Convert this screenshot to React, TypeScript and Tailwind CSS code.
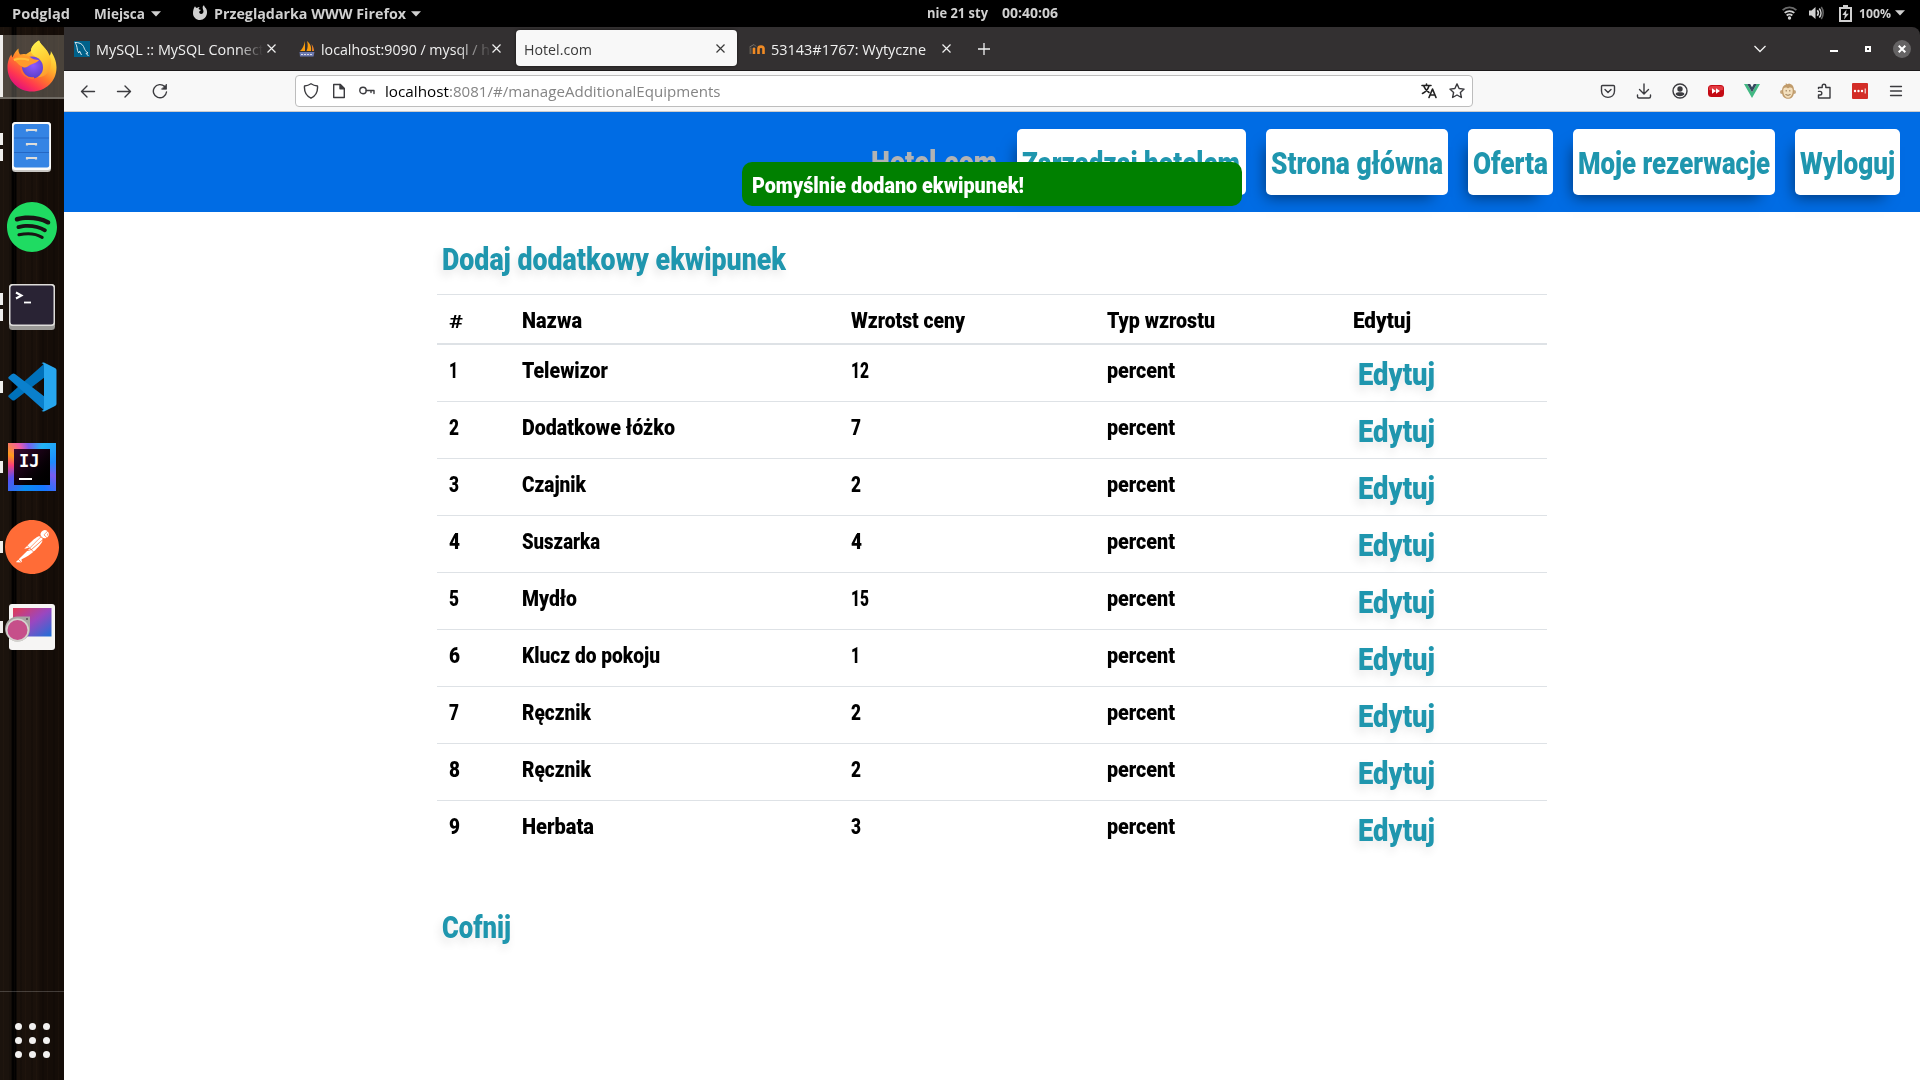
import { useLayoutEffect, useRef, type ReactNode } from "react";
import { SiPostman, SiSpotify } from "react-icons/si";

/** Text squeezed or stretched horizontally to an exact width. */
function Fit({ w, className = "", children }: { w: number; className?: string; children: ReactNode }) {
  const ref = useRef<HTMLSpanElement>(null);
  useLayoutEffect(() => {
    const el = ref.current;
    if (el) el.style.transform = `scaleX(${w / el.getBoundingClientRect().width})`;
    return () => {
      if (el) el.style.transform = "";
    };
  }, [w]);
  return (
    <span className={`inline-flex shrink-0 whitespace-pre ${className}`} style={{ width: w }}>
      <span ref={ref} className="inline-block shrink-0 origin-left">
        {children}
      </span>
    </span>
  );
}

function Caret({ className = "" }: { className?: string }) {
  return (
    <svg className={`shrink-0 ${className}`} width="10" height="6" viewBox="0 0 10 6">
      <path d="M0 0.3h10L5 5.5z" fill="#d0d0d0" />
    </svg>
  );
}

function TopBar() {
  return (
    <header className="flex h-[27px] shrink-0 items-center bg-black font-['Open_Sans',sans-serif] text-[14px] leading-[26px] font-bold text-[#d0d0d0]">
      <Fit w={58} className="ml-[12px]">Podgląd</Fit>
      <Fit w={51} className="ml-[24px]">Miejsca</Fit>
      <Caret className="ml-[6px]" />
      <svg className="mb-[1px] ml-[31px] shrink-0" width="16" height="16" viewBox="0 0 16 16">
        <path d="M3 1.2c.4.9 1.1 1.6 2 1.900 1-.9 2.200-1.100 3-1-1.400.7-1.500 1.600-1.100 2.200.6.5 1.700.4 1.900.8-.2.9-1.300 1-1.600 1.700-.2 1.200.7 2.100 1.900 2.100 1.600 0 2.700-1.300 2.300-3.200-.2-1-.9-1.900-.7-3.900.3-.9.8-1.300 1.300-1.600.3 1.200.9 1.800 1.700 2.900 1 1.400 1.500 3 1.300 5C14.600 12.200 11.700 15 8 15 4.100 15 1 12 1 8.200 1 5.500 1.600 3 3 1.200z" fill="#d0d0d0" />
      </svg>
      <Fit w={192} className="ml-[6px]">Przeglądarka WWW Firefox</Fit>
      <Caret className="ml-[5px]" />
      <Fit w={61} className="mb-[2px] ml-[506px]">nie 21 sty</Fit>
      <Fit w={56} className="mb-[2px] ml-[14px]">00:40:06</Fit>
      <div className="ml-auto flex items-center pr-[15px] pb-[1px]">
        <svg width="15" height="14" viewBox="0 0 15 14" fill="none" stroke="#d0d0d0" strokeWidth="1.800">
          <path d="M.6 4.200C4.400.400 10.600.400 14.400 4.200" stroke="#6a6a6a" />
          <path d="M2.700 6.900c2.600-2.500 7-2.500 9.600 0M4.700 9.500c1.500-1.500 4.100-1.500 5.600 0" />
          <circle cx="7.500" cy="12" r="1.700" fill="#d0d0d0" stroke="none" />
        </svg>
        <svg className="ml-[12px]" width="15" height="14" viewBox="0 0 15 14" fill="none">
          <path d="M0 4.500h2.500L6.500 1v12L2.500 9.500H0z" fill="#d0d0d0" />
          <path d="M8.300 4.300c1.300 1.600 1.300 3.800 0 5.400M10.300 2.400c2.200 2.700 2.200 6.500 0 9.200" stroke="#d0d0d0" strokeWidth="1.600" />
          <path d="M12.300 1c2.500 3.500 2.500 8.500 0 12" stroke="#666" strokeWidth="1.500" />
        </svg>
        <svg className="ml-[15px]" width="13" height="17" viewBox="0 0 13 17">
          <path d="M1 3h11v13H1z" fill="none" stroke="#d0d0d0" strokeWidth="2" />
          <path d="M4 0h5v3H4zM7.500 4.500 3.300 10h2.600L5 14.500 9.800 8.700H7z" fill="#d0d0d0" />
        </svg>
        <Fit w={32} className="ml-[7px] text-[13px]">100%</Fit>
        <Caret className="ml-[4px]" />
      </div>
    </header>
  );
}

function FirefoxIcon() {
  return (
    <svg width="50" height="52" viewBox="0 0 50 52">
      <defs>
        <linearGradient id="ffBody" x1="0.8" y1="0.1" x2="0.25" y2="0.95">
          <stop offset="0" stopColor="#fff04a" />
          <stop offset="0.3" stopColor="#ffbd2f" />
          <stop offset="0.55" stopColor="#ff7a2a" />
          <stop offset="0.8" stopColor="#ff3750" />
          <stop offset="1" stopColor="#e4127a" />
        </linearGradient>
        <radialGradient id="ffGlobe" cx="0.55" cy="0.4" r="0.6">
          <stop offset="0" stopColor="#9059ff" />
          <stop offset="1" stopColor="#5a3ec8" />
        </radialGradient>
        <linearGradient id="ffTail" x1="0.3" y1="0" x2="0.6" y2="1">
          <stop offset="0" stopColor="#fff14f" />
          <stop offset="0.6" stopColor="#ffc930" />
          <stop offset="1" stopColor="#ff9a2e" />
        </linearGradient>
      </defs>
      <path d="M32 .5c1 3 3.500 5 6.500 8.500 2 2.500 3 5 3.500 7 1.500-.5 2-3 1.800-5C47 16 49.500 21 49.500 27.500 49.500 41.500 38.500 51.500 25 51.500S.5 41 .5 27.500C.5 22 2 17 4.500 14.500c.2 1.800.7 2.500 1 3C7 13 9.500 10 11.500 8.500c-.2 2.500.5 4.500 1.500 6 2-.5 3.500-.7 6-.3L24 11c0-4 3.500-8 8-10.500z" fill="url(#ffBody)" />
      <path d="M32 .5c1 3 3.500 5 6.500 8.500 7 8 7 18 2 24-4 5-12 5-14 3 9-1 12-10 7-16-3-3-8-4-9.500-8C23.500 8 27 3 32 .5z" fill="url(#ffTail)" />
      <circle cx="25" cy="27.500" r="11" fill="url(#ffGlobe)" />
      <path d="M6 19c6-4 12-4 17-2 2 2 5 3 9 3-2 3-6 3.500-9 5-2.500 1.500-3.500 3-6 2.500-4-1-6-4.500-11-8.500z" fill="#ff9a2b" />
      <path d="M7 20c5-2 10-1.500 15 0" stroke="#ffbe3c" strokeWidth="2" fill="none" />
      <path d="M14 26c0 8 6 13 13 12" stroke="#ff6a35" strokeWidth="2" fill="none" />
    </svg>
  );
}

function FilesIcon() {
  return (
    <svg className="mr-[1px]" width="39" height="50" viewBox="0 0 39 50">
      <rect x="0" y="0" width="39" height="50" rx="3.500" fill="#c9c7c4" />
      <rect x="0" y="0" width="39" height="48" rx="3.500" fill="#fafafa" />
      <rect x="1.800" y="2" width="35.400" height="43.500" rx="2" fill="#3584e4" />
      <path d="M2 16h35M2 30.500h35" stroke="#2467c4" strokeWidth="1" />
      {[9.500, 23.500, 37.500].map((y) => (
        <path key={y} d={`M15 ${y - 1}v-1.500h9v1.500`} transform="translate(0 1)" stroke="#deddda" strokeWidth="2.200" fill="none" />
      ))}
    </svg>
  );
}

function TerminalIcon() {
  return (
    <svg width="46" height="46" viewBox="0 0 46 46">
      <rect width="46" height="46" rx="3.500" fill="#9a9996" />
      <rect width="46" height="42" rx="3.500" fill="#deddda" />
      <rect x="1.500" y="1.500" width="43" height="39" rx="2.500" fill="#292334" />
      <path d="m7 8.500 5.500 3L7 14.500" stroke="#fff" strokeWidth="2" fill="none" />
      <path d="M15 18.500h7" stroke="#fff" strokeWidth="1.800" />
    </svg>
  );
}

function CodeIcon() {
  return (
    <svg width="50" height="50" viewBox="0 0 50 50">
      <path d="M1.500 35 5 38c1 .7 2 .7 3 0l30-23V1L2 33c-.8.7-.9 1.400-.5 2z" fill="#0071ba" />
      <path d="M1.500 15 5 12c1-.7 2-.7 3 0l30 23v14L2 17c-.8-.7-.9-1.400-.5-2z" fill="#0a80cd" />
      <path d="M37 .5 48 6c1 .6 1.500 1.500 1.500 2.500v33c0 1-.5 2-1.500 2.500L37 49.500c-1 .3-2 0-2.500-.7 1.500 0 2.500-1 2.500-2.500V3.700c0-1.500-1-2.500-2.500-2.500C35 .5 36 .2 37 .5z" fill="#27a6ee" />
    </svg>
  );
}

function IdeaIcon() {
  return (
    <div className="flex size-[48px] items-center justify-center bg-[conic-gradient(from_300deg,#ff9b1a,#f05aa8_8%,#7a5cf0_14%,#22b6f5_24%,#1e8bff_38%,#7a5cf0_48%,#1777ff_58%,#0a8cf0_72%,#5a4ff0_84%,#fc3f7a_93%,#ff9b1a)]">
      <div className="flex h-[36px] w-[36px] flex-col bg-gradient-to-br from-[#3a0a33] to-black pt-[5px] pl-[5px] font-['DejaVu_Sans_Mono',monospace] leading-[14px] font-bold text-white">
        <span className="text-[17px]">IJ</span>
        <span className="mt-[10px] h-[2px] w-[13px] bg-white" />
      </div>
    </div>
  );
}

function ScreenshotIcon() {
  return (
    <svg className="mr-[4px]" width="50" height="46" viewBox="0 0 50 46">
      <defs>
        <linearGradient id="shot" x1="0" y1="0" x2="1" y2="1">
          <stop offset="0" stopColor="#e23a54" />
          <stop offset="0.5" stopColor="#9a47c0" />
          <stop offset="1" stopColor="#1c71d8" />
        </linearGradient>
      </defs>
      <rect x="4" width="46" height="46" rx="3" fill="#f6f5f4" />
      <rect x="8" y="4" width="38.500" height="28.500" fill="url(#shot)" />
      <path d="M12.500 12.500H25V26a12.500 12.500 0 1 1-12.500-13.500z" fill="#a8a6a3" />
      <circle cx="12.500" cy="26" r="11.500" fill="#d5d3cf" />
      <circle cx="12.500" cy="26" r="10" fill="#c64f8a" />
      <circle cx="22" cy="15" r="1" fill="#555" />
    </svg>
  );
}

const dockItems: { key: string; icon: ReactNode; windows: number }[] = [
  { key: "firefox", icon: <FirefoxIcon />, windows: 0 },
  { key: "files", icon: <FilesIcon />, windows: 2 },
  {
    key: "spotify",
    icon: (
      <div className="flex size-[50px] items-center justify-center rounded-full bg-[radial-gradient(#191414_66%,transparent_67%)]">
        <SiSpotify size={50} color="#1fdb62" />
      </div>
    ),
    windows: 0,
  },
  { key: "terminal", icon: <TerminalIcon />, windows: 2 },
  { key: "code", icon: <CodeIcon />, windows: 1 },
  { key: "idea", icon: <IdeaIcon />, windows: 1 },
  {
    key: "postman",
    icon: (
      <div className="flex size-[54px] items-center justify-center rounded-full bg-[radial-gradient(#fff_66%,transparent_67%)]">
        <SiPostman size={54} color="#ff6c37" />
      </div>
    ),
    windows: 1,
  },
  { key: "screenshot", icon: <ScreenshotIcon />, windows: 1 },
];

function Dock() {
  return (
    <aside className="flex w-[64px] shrink-0 flex-col bg-[#160e09] bg-[repeating-linear-gradient(90deg,transparent_0_3px,rgba(90,60,35,.07)_3px_4px,transparent_4px_9px,rgba(0,0,0,.15)_9px_11px),linear-gradient(90deg,#1b130d_0_11px,#020101_12px_16px,#1a110b_17px_38px,#150d08_40px)]">
      {dockItems.map((item, i) => (
        <div key={item.key} className="flex h-[80px] items-center">
          <div className={`flex w-full items-center ${i === 0 ? "h-[64px] border-b-2 border-[#8a8780]/60 bg-[#c8c0b4]/30" : "h-full"}`}>
            <div className="flex w-[3px] flex-col justify-center gap-[4px] self-stretch">
              {i === 0 && <span className="h-full w-[3px] bg-[#f0efed]" />}
              {Array.from({ length: item.windows }, (_, n) => (
                <span key={n} className="h-[12px] w-[3px] bg-[#f0efed]" />
              ))}
            </div>
            <div className="flex w-[58px] items-center justify-center">{item.icon}</div>
          </div>
        </div>
      ))}
      <div className="mt-auto flex h-[89px] flex-col items-center border-t border-white/20">
        <div className="mt-[31px] grid grid-cols-3 gap-[7px]">
          {Array.from({ length: 9 }, (_, i) => (
            <span key={i} className="size-[7px] rounded-full bg-[#f2f1f0]" />
          ))}
        </div>
      </div>
    </aside>
  );
}

function Close({ className = "" }: { className?: string }) {
  return (
    <svg className={`shrink-0 ${className}`} width="9" height="9" viewBox="0 0 9 9" stroke="currentColor" strokeWidth="1.200">
      <path d="m.5.5 8 8M8.500.5l-8 8" />
    </svg>
  );
}

function TabStrip() {
  return (
    <div className="flex h-[44px] shrink-0 items-center rounded-tr-[8px] border-b border-[#1c1a1b] bg-[#333031] font-['Open_Sans',sans-serif] text-[14px] leading-[36px] text-[#f0f0f0]">
      <svg className="ml-[10px] shrink-0" width="16" height="16" viewBox="0 0 16 16" fill="none">
        <path d="M0 0h16v16H0z" fill="#00618a" />
        <path d="M1 1.500c4 0 7 1 8.500 4 1 2 1 4 4.500 6.500l-2 .3 2.500 2.700M1 1.500c1 1.500 1.500 2.500 2 5 .3 2 .5 4 1.800 5.500l.7-2 2 4" stroke="#dcebf2" strokeWidth="1" />
      </svg>
      <div className="ml-[6px] flex w-[167px] overflow-hidden pt-[2px] [mask-image:linear-gradient(90deg,#000_142px,transparent_167px)]">
        <Fit w={168}>MySQL :: MySQL Connect</Fit>
      </div>
      <Close className="ml-[4px]" />
      <svg className="ml-[23px] shrink-0" width="16" height="16" viewBox="0 0 16 16">
        <path d="M6 0v10H1c2.500-2 4-5.500 5-10zM8 0c4 3 4.500 7 4 10H7.500C9 7 9 3 8 0z" fill="#f89c0e" />
        <path d="M12.500 3c1.800 2 2.500 5 2.500 7h-2c.3-2.500 0-5-.5-7z" fill="#e9812a" />
        <path d="M.5 11h15l-1 4.500H1z" fill="#6c78af" />
        <path d="M2 13.500h12" stroke="#d8dbe8" strokeDasharray="2 1" />
      </svg>
      <div className="ml-[6px] flex w-[168px] overflow-hidden pt-[2px] [mask-image:linear-gradient(90deg,#000_135px,transparent_172px)]">
        <Fit w={169}>localhost:9090 / mysql / h</Fit>
      </div>
      <Close className="ml-[3px]" />
      <div className="mb-[1px] ml-[15px] flex h-[36px] w-[221px] shrink-0 items-center rounded-[4px] bg-[#f8f8f8] pl-[8px] text-[#3a3a3a] shadow-[0_0_3px_rgba(0,0,0,.6)]">
        <Fit w={68} className="pt-[3px]">Hotel.com</Fit>
        <Close className="ml-[124px]" />
      </div>
      <svg className="ml-[12px] shrink-0" width="16" height="12" viewBox="0 0 16 12" fill="none">
        <path d="M1.500 11V4.500M5 11V4" stroke="#5e5850" strokeWidth="2" />
        <path d="M.5 4 5 1.500 7 3.500" stroke="#77706a" strokeWidth="1" />
        <path d="M5 11V5M9.500 11V5.500c0-2.500 5-2.500 5 0V11" stroke="#f08a24" strokeWidth="2.600" />
      </svg>
      <Fit w={155} className="ml-[6px] pt-[2px]">53143#1767: Wytyczne</Fit>
      <Close className="ml-[16px]" />
      <svg className="ml-[27px] shrink-0" width="12" height="12" viewBox="0 0 12 12" stroke="#f2f2f2" strokeWidth="1.300">
        <path d="M6 0v12M0 6h12" />
      </svg>
      <svg className="ml-auto shrink-0" width="12" height="8" viewBox="0 0 12 8" fill="none" stroke="#f2f2f2" strokeWidth="1.300">
        <path d="m.5 1 5.500 5.500L11.500 1" />
      </svg>
      <span className="mt-[5px] ml-[64px] h-[2px] w-[8px] bg-white" />
      <span className="ml-[27px] size-[6px] border-2 border-white" />
      <span className="mr-[9px] ml-[22px] flex size-[18px] items-center justify-center rounded-full bg-[#656364]">
        <svg width="8" height="8" viewBox="0 0 8 8" stroke="#fff" strokeWidth="2">
          <path d="m.7.7 6.600 6.600M7.300.7.700 7.300" />
        </svg>
      </span>
    </div>
  );
}

function Glyph({ className = "", children }: { className?: string; children: ReactNode }) {
  return (
    <svg className={`shrink-0 ${className}`} width="16" height="16" viewBox="0 0 16 16" fill="none" stroke="#3b3b3f" strokeWidth="1.400" strokeLinecap="round" strokeLinejoin="round">
      {children}
    </svg>
  );
}

function Toolbar() {
  return (
    <div className="flex h-[41px] shrink-0 items-center border-b border-[#cccccc] bg-[#f8f8f8] font-['Open_Sans',sans-serif]">
      <Glyph className="ml-[16px]"><path d="M14.500 8.500h-13M7 3 1.500 8.500 7 14" /></Glyph>
      <Glyph className="ml-[20px]"><path d="M1.500 8.500h13M9 3l5.500 5.500L9 14" /></Glyph>
      <Glyph className="ml-[20px]">
        <path d="M14.500 9A6.600 6.600 0 1 1 12.700 3.600" />
        <path d="M14.500 1.500v4.700H9.800z" fill="#3b3b3f" strokeWidth=".8" />
      </Glyph>
      <div className="ml-[127px] flex h-[32px] w-[1178px] shrink-0 items-center rounded-[4px] border border-[#bdbdbd] bg-white text-[14px] leading-[30px] text-[#848484]">
        <Glyph className="ml-[7px]"><path d="M8 .8c2 1.400 4 2 6.500 2.200C15 9 12.500 13 8 15.200 3.500 13 1 9 1.500 3 4 2.800 6 2.200 8 .8z" /></Glyph>
        <Glyph className="ml-[12px]">
          <path d="M2.700 1.500h6.600l4 4v9H2.700z" /><path d="M9 1.500v4.300h4.300z" fill="#3b3b3f" />
        </Glyph>
        <Glyph className="ml-[12px]"><circle cx="4" cy="7.500" r="3.200" /><path d="M7.200 7.500H15v3M12 7.500v2" /></Glyph>
        <Fit w={64} className="ml-[10px] pt-[2px] text-black">localhost</Fit>
        <Fit w={271.500} className="pt-[2px]">:8081/#/manageAdditionalEquipments</Fit>
        <Glyph className="ml-auto"><path d="M1 2.500h9M5.500 1v1.500M8 3C7 6 4.500 9 1.500 10.500M3 3.500c1 3 3.500 5 5 6M8 14.500l3.500-8.500 3.500 8.500M9.200 12h4.600" stroke="#222" strokeWidth="1.600" /></Glyph>
        <Glyph className="mr-[7px] ml-[12px]"><path d="m8 .9 2.100 4.600 5 .6-3.700 3.400 1 5L8 12l-4.400 2.500 1-5L.9 6.100l5-.6z" /></Glyph>
      </div>
      <Glyph className="ml-[127px]"><path d="M2.500 2.500h11q1 0 1 1V8c0 8.500-13 8.500-13 0V3.500q0-1 1-1zM5 6.500 8 9.500l3-3" /></Glyph>
      <Glyph className="ml-[20px]"><path d="M8 1v9.500M3.500 6.500 8 11l4.500-4.500M1.500 12v1.500q0 1.500 1.500 1.500h10q1.500 0 1.500-1.500V12" /></Glyph>
      <Glyph className="ml-[20px]">
        <circle cx="8" cy="8" r="7" /><circle cx="8" cy="6" r="2.700" fill="#3b3b3f" stroke="none" />
        <path d="M3.500 11.200c.5-2 2.500-2 4.500-2s4 0 4.500 2c-2 2.600-7 2.600-9 0z" fill="#3b3b3f" stroke="none" />
      </Glyph>
      <svg className="ml-[20px] shrink-0" width="16" height="16" viewBox="0 0 16 16">
        <rect y="2" width="16" height="12" rx="3.500" fill="#c40a14" /><path d="M1 3.500q7-1.500 14 0V7q-7 1-14 0z" fill="#e23a41" />
        <path d="M4 5.200 8 8l-4 2.800zM8 5.200 12 8l-4 2.800z" fill="#fff" />
      </svg>
      <svg className="ml-[20px] shrink-0" width="16" height="16" viewBox="0 0 16 16">
        <path d="M0 1h3.200L8 9.300 12.800 1H16L8 15z" fill="#42b883" /><path d="M3.200 1h3L8 4.200 9.800 1h3L8 9.300z" fill="#35495e" />
      </svg>
      <svg className="ml-[20px] shrink-0" width="16" height="16" viewBox="0 0 16 16">
        <circle cx="2" cy="9" r="2" fill="#c5a67c" /><circle cx="14" cy="9" r="2" fill="#c5a67c" />
        <path d="M9 .5C13 1.500 14.300 4 14 9s-2.500 6.800-6 6.800S2 13.500 2 9s1-6.500 4-7.500l-.5-1c1 0 1.800.3 2 .8z" fill="#c09b6b" />
        <path d="M5.500 4.500c1.500 0 2.500.8 2.500.8s1-.8 2.500-.8c2.500 0 2.500 3 2 5.500s-2 4.800-4.500 4.800S4 12.500 3.500 10s-.5-5.500 2-5.500z" fill="#f3dfbd" />
        <path d="M6.200 7v1.500M9.800 7v1.500M5.500 11.500q2.500 1.600 5 0" stroke="#8a6d4a" strokeWidth=".9" fill="none" />
      </svg>
      <Glyph className="ml-[20px]"><path d="M2.500 5.500V4.500h3.700V3a1.800 1.800 0 0 1 3.600 0v1.500H14V15H2.500v-3H4a1.800 1.800 0 0 0 0-3.600H2.500" /></Glyph>
      <svg className="ml-[20px] shrink-0" width="16" height="16" viewBox="0 0 16 16">
        <rect width="16" height="16" rx="1" fill="#d32d27" />
        <circle cx="3" cy="8" r="1.200" fill="#fff" /><circle cx="6.500" cy="8" r="1.200" fill="#fff" /><circle cx="10" cy="8" r="1.200" fill="#fff" />
        <path d="M13.200 5.500v5" stroke="#fff" />
      </svg>
      <Glyph className="ml-[20px]"><path d="M2.500 3.500h11M2.500 8h11M2.500 12.500h11" strokeWidth="1.300" /></Glyph>
    </div>
  );
}

const navItems = [
  { label: "Zarządzaj hotelem", box: "w-[229px]", w: 218 },
  { label: "Strona główna", box: "w-[182px]", w: 172 },
  { label: "Oferta", box: "w-[85px]", w: 75 },
  { label: "Moje rezerwacje", box: "w-[202px]", w: 192 },
  { label: "Wyloguj", box: "w-[105px]", w: 95 },
];

function Navbar() {
  return (
    <nav className="flex h-[100px] shrink-0 items-center justify-end gap-[20px] bg-[#006ce4] pr-[20px] text-[31px] leading-[40px] font-black text-[#1f96ae]">
      <Fit w={126} className="pt-[1px] text-[#b3b3b3]">Hotel.com</Fit>
      {navItems.map((n) => (
        <a key={n.label} className={`flex h-[66px] items-center rounded-[5px] bg-white pt-[3px] pl-[5px] shadow-[-8px_10px_14px_-8px_rgba(0,0,0,.5)] ${n.box}`}>
          <Fit w={n.w}>{n.label}</Fit>
        </a>
      ))}
    </nav>
  );
}

const glow = "[text-shadow:-3px_5px_10px_rgba(0,0,0,.1)]";
const grid = "grid grid-cols-[73px_329px_256px_246px_1fr] pl-[12px]";

const digitWidth: Record<string, number> = { "1": 9, "2": 10, "3": 10, "4": 11, "5": 10, "6": 11, "7": 10, "8": 11, "9": 11, "12": 18, "15": 18 };

const rows: [string, number, string][] = [
  ["Telewizor", 86, "12"],
  ["Dodatkowe łóżko", 153, "7"],
  ["Czajnik", 64, "2"],
  ["Suszarka", 78, "4"],
  ["Mydło", 55, "15"],
  ["Klucz do pokoju", 138, "1"],
  ["Ręcznik", 69, "2"],
  ["Ręcznik", 69, "2"],
  ["Herbata", 72, "3"],
];

function Content() {
  return (
    <main className="ml-[373px] flex w-[1110px] flex-col font-black text-black">
      <h1 className={`mt-[28px] flex pl-[5px] text-[31px] leading-[40px] text-[#1f96ae] ${glow}`}>
        <Fit w={344}>Dodaj dodatkowy ekwipunek</Fit>
      </h1>
      <div className="mt-[14px] text-[22.500px] leading-[50px]">
        <div className={`${grid} h-[51px] border-t border-b-2 border-[#dee2e6] leading-[51px]`}>
          <Fit w={14} className="pt-[1px] text-[18px] font-bold">#</Fit>
          <Fit w={60}>Nazwa</Fit>
          <Fit w={114}>Wzrotst ceny</Fit>
          <Fit w={108}>Typ wzrostu</Fit>
          <Fit w={58}>Edytuj</Fit>
        </div>
        {rows.map(([name, w, price], i) => (
          <div key={i} className={`${grid} ${i === 0 ? "h-[56px]" : "h-[57px] border-t border-[#dee2e6]"}`}>
            <Fit w={digitWidth[String(i + 1)]}>{i + 1}</Fit>
            <Fit w={w}>{name}</Fit>
            <Fit w={digitWidth[price]}>{price}</Fit>
            <Fit w={68}>percent</Fit>
            <a className={`flex pl-[5px] text-[31px] leading-[60px] text-[#1f96ae] ${glow}`}>
              <Fit w={77}>Edytuj</Fit>
            </a>
          </div>
        ))}
      </div>
      <a className={`mt-[51px] flex pl-[5px] text-[31px] leading-[40px] text-[#1f96ae] ${glow}`}>
        <Fit w={69}>Cofnij</Fit>
      </a>
    </main>
  );
}

export default function App() {
  return (
    <div className="relative flex h-[1080px] w-[1920px] flex-col overflow-hidden bg-black">
      <TopBar />
      <div className="flex min-h-0 flex-1">
        <Dock />
        <div className="flex min-w-0 flex-1 flex-col">
          <TabStrip />
          <Toolbar />
          <div className="flex flex-1 flex-col bg-white font-['Roboto',sans-serif]">
            <Navbar />
            <Content />
          </div>
        </div>
      </div>
      <div className="absolute top-[162px] left-[742px] flex h-[44px] w-[500px] items-center rounded-[10px] bg-[#008000] pt-[1px] pl-[10px] font-['Roboto',sans-serif] text-[22.500px] leading-[40px] font-black text-white">
        <Fit w={272}>Pomyślnie dodano ekwipunek!</Fit>
      </div>
    </div>
  );
}
